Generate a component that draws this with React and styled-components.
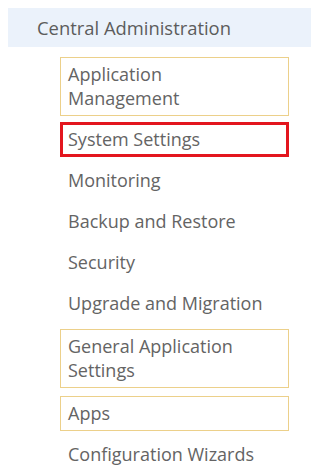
import React from "react";
import styled, { createGlobalStyle } from "styled-components";

const GlobalStyle = createGlobalStyle`
  html, body {
    margin: 0;
    padding: 0;
    background: #fff;
  }
  body {
    font-family: "Open Sans", "Noto Sans", sans-serif;
  }
`;

const items = [
  { label: "Application Management", mark: "outlined" },
  { label: "System Settings", mark: "selected" },
  { label: "Monitoring" },
  { label: "Backup and Restore" },
  { label: "Security" },
  { label: "Upgrade and Migration" },
  { label: "General Application Settings", mark: "outlined" },
  { label: "Apps", mark: "outlined" },
  { label: "Configuration Wizards" },
];

const App = () => {
  return (
    <>
      <GlobalStyle />
      <Nav>
        <Header>Central Administration</Header>
        <List>
          {items.map((item) => (
            <Item key={item.label} $mark={item.mark}>
              {item.label}
            </Item>
          ))}
        </List>
      </Nav>
    </>
  );
};

const Nav = styled.nav`
  width: 319px;
  padding-top: 8px;
  box-sizing: border-box;
`;

const Header = styled.div`
  margin: 0 8px;
  height: 39px;
  line-height: 39px;
  padding-left: 29px;
  background-color: #ebf2fb;
  color: #5c5c5c;
  font-size: 18.4px;
`;

const List = styled.ul`
  list-style: none;
  margin: 8px 0 0 60px;
  padding: 0;
  width: 229px;
  display: flex;
  flex-direction: column;
  gap: 6px;
`;

const Item = styled.li`
  box-sizing: border-box;
  padding: ${(p) =>
    p.$mark === "selected" ? "2px 18px 3px 5px" : "4px 20px 5px 7px"};
  border: ${(p) =>
    p.$mark === "selected"
      ? "3px solid #e3161e"
      : p.$mark === "outlined"
      ? "1px solid #ecd08a"
      : "1px solid transparent"};
  margin-top: ${(p) => (p.$mark === "outlined" ? "2px" : "0")};
  font-size: 18px;
  line-height: 24px;
  color: #646464;
`;

export default App;
